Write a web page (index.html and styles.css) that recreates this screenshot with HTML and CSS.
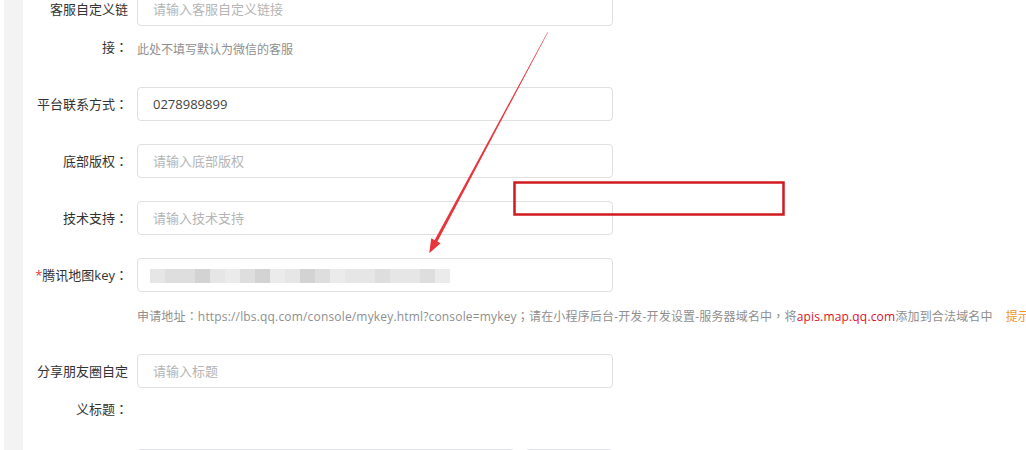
FILE: index.html
```html
<!DOCTYPE html>
<html lang="zh-CN">
<head>
<meta charset="utf-8">
<title>设置</title>
<link rel="stylesheet" href="styles.css">
</head>
<body>
<div class="page">
  <aside class="strip"></aside>
  <main class="form">
    <div class="row">
      <label class="label">客服自定义链接<span class="p" lang="zh-TW">：</span></label>
      <div class="control">
        <input class="input" type="text" placeholder="请输入客服自定义链接">
        <div class="hint">此处不填写默认为微信的客服</div>
      </div>
    </div>
    <div class="row">
      <label class="label">平台联系方式<span class="p" lang="zh-TW">：</span></label>
      <div class="control">
        <input class="input" type="text" value="0278989899">
      </div>
    </div>
    <div class="row">
      <label class="label">底部版权<span class="p" lang="zh-TW">：</span></label>
      <div class="control">
        <input class="input" type="text" placeholder="请输入底部版权">
      </div>
    </div>
    <div class="row">
      <label class="label">技术支持<span class="p" lang="zh-TW">：</span></label>
      <div class="control">
        <input class="input" type="text" placeholder="请输入技术支持">
      </div>
    </div>
    <div class="row">
      <label class="label"><span class="req">*</span>腾讯地图key<span class="p" lang="zh-TW">：</span></label>
      <div class="control">
        <div class="input masked">
          <span class="cell c2"></span><span class="cell c1"></span><span class="cell c1"></span><span class="cell c3"></span><span class="cell c2"></span><span class="cell c4"></span><span class="cell c1"></span><span class="cell c3"></span><span class="cell c4"></span><span class="cell c2"></span><span class="cell c3"></span><span class="cell c1"></span><span class="cell c4"></span><span class="cell c2"></span><span class="cell c2"></span><span class="cell c1"></span><span class="cell c2"></span><span class="cell c2"></span><span class="cell c1"></span><span class="cell c4"></span>
        </div>
        <div class="hint nowrap">申请地址<span class="p" lang="zh-TW">：</span>https://lbs.qq.com/console/mykey.html?console=mykey<span class="p" lang="zh-TW">；</span>请在小程序后台-开发-开发设置-服务器域名中<span class="p" lang="zh-TW">，</span>将<span class="red">apis.map.qq.com</span>添加到合法域名中<span class="tip">提示</span></div>
      </div>
    </div>
    <div class="row">
      <label class="label">分享朋友圈自定义标题<span class="p" lang="zh-TW">：</span></label>
      <div class="control">
        <input class="input" type="text" placeholder="请输入标题">
      </div>
    </div>
    <div class="row">
      <label class="label"></label>
      <div class="control split">
        <input class="input wide" type="text">
        <input class="input narrow" type="text">
      </div>
    </div>
  </main>
  <svg class="overlay" width="1026" height="450" viewBox="0 0 1026 450" aria-hidden="true">
    <rect x="514.5" y="182.5" width="269" height="32" fill="none" stroke="#cf1a20" stroke-width="2.5"/>
    <polygon points="547.5,32.2 547.9,32.4 436.4,243.4 433.6,242.0" fill="#e8353b"/>
    <polygon points="429.3,253.3 440.6,243.2 431.2,238.2" fill="#e8353b"/>
  </svg>
</div>
</body>
</html>
```

FILE: styles.css
```css
html, body {
  margin: 0;
  padding: 0;
  background: #fff;
  overflow: hidden;
}

body {
  font-family: "Open Sans", "Noto Sans CJK SC", sans-serif;
  font-size: 13px;
  color: #333;
}

.page {
  position: relative;
  display: flex;
  width: 1026px;
  height: 450px;
  overflow: hidden;
}

.strip {
  flex: 0 0 19px;
  margin-left: 4px;
  background: #f3f3f3;
}

.form {
  flex: 1;
  margin-top: -10px;
  padding-left: 10px;
  min-width: 0;
}

.row {
  display: flex;
  gap: 9px;
  margin-bottom: 19px;
}

.label {
  flex: 0 0 95px;
  width: 95px;
  text-align: right;
  line-height: 38px;
  color: #333;
  font-size: 13px;
}

.p {
  font-family: "Noto Sans CJK TC", "Noto Sans CJK SC", sans-serif;
}

.req {
  color: #e4393c;
}

.control {
  display: flex;
  flex-direction: column;
  min-width: 0;
}

.input {
  display: block;
  box-sizing: border-box;
  width: 476px;
  height: 34px;
  margin: 2px 0 0;
  padding: 0 15px;
  border: 1px solid #e0e0e0;
  border-radius: 4px;
  background: #fff;
  font-family: "Open Sans", "Noto Sans CJK SC", sans-serif;
  font-size: 13px;
  color: #444;
  outline: none;
}

.input::placeholder {
  color: #b5b5b5;
}

.masked {
  display: flex;
  align-items: center;
  padding: 2px 0 0 12px;
}

.cell {
  display: block;
  width: 15px;
  height: 14px;
}

.c1 { background: #dedede; }
.c2 { background: #e6e6e6; }
.c3 { background: #d3d3d3; }
.c4 { background: #ebebeb; }

.hint {
  margin: 14px 0 6px;
  line-height: 20px;
  font-size: 12px;
  color: #8f8f8f;
}

.nowrap {
  white-space: nowrap;
  letter-spacing: 0.17px;
}

.red {
  color: #e0111f;
}

.tip {
  margin-left: 13px;
  color: #f0962a;
}

.split {
  flex-direction: row;
  gap: 10px;
}

.wide {
  width: 378px;
  border-color: #e2e2ea;
}

.narrow {
  width: 88px;
  border-color: #e2e2ea;
}

.overlay {
  position: absolute;
  left: 0;
  top: 0;
  pointer-events: none;
}
```
